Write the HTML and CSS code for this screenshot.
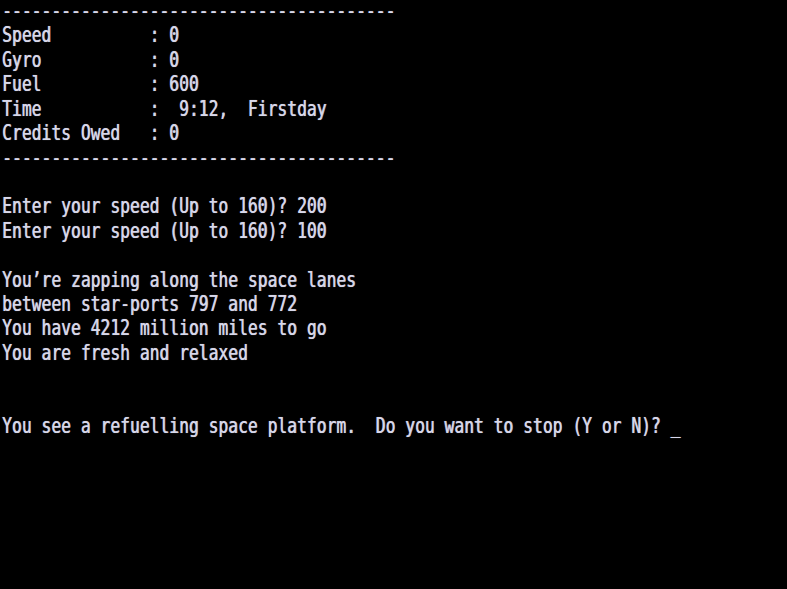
FILE: index.html
```html
<!DOCTYPE html>
<html>
<head>
<meta charset="utf-8">
<link rel="stylesheet" href="styles.css">
</head>
<body>
<div class="screen">
<pre class="term">----------------------------------------
Speed          : 0
Gyro           : 0
Fuel           : 600
Time           :  9:12,  Firstday
Credits Owed   : 0
----------------------------------------

Enter your speed (Up to 160)? 200
Enter your speed (Up to 160)? 100

You’re zapping along the space lanes
between star-ports 797 and 772
You have 4212 million miles to go
You are fresh and relaxed


You see a refuelling space platform.  Do you want to stop (Y or N)? <span class="cursor">_</span></pre>
</div>
</body>
</html>
```
FILE: styles.css
```css
html, body {
  margin: 0;
  padding: 0;
  background: #000;
  overflow: hidden;
}
.screen {
  width: 787px;
  height: 589px;
  background: #000;
  overflow: hidden;
}
.term {
  margin: 0;
  padding: 0 0 0 2px;
  width: 785px;
  font-family: "DejaVu Sans Mono", monospace;
  font-size: 16.33px;
  line-height: 19.42px;
  color: #d8d8ea;
  white-space: pre;
  transform: translateY(-1px) scaleY(1.258);
  transform-origin: 0 0;
  text-shadow: 0.6px 0 0 rgba(216, 216, 234, 0.8), 0 0 1px rgba(216, 216, 234, 0.4);
}
.cursor {
  color: #d8d8ea;
}
```
